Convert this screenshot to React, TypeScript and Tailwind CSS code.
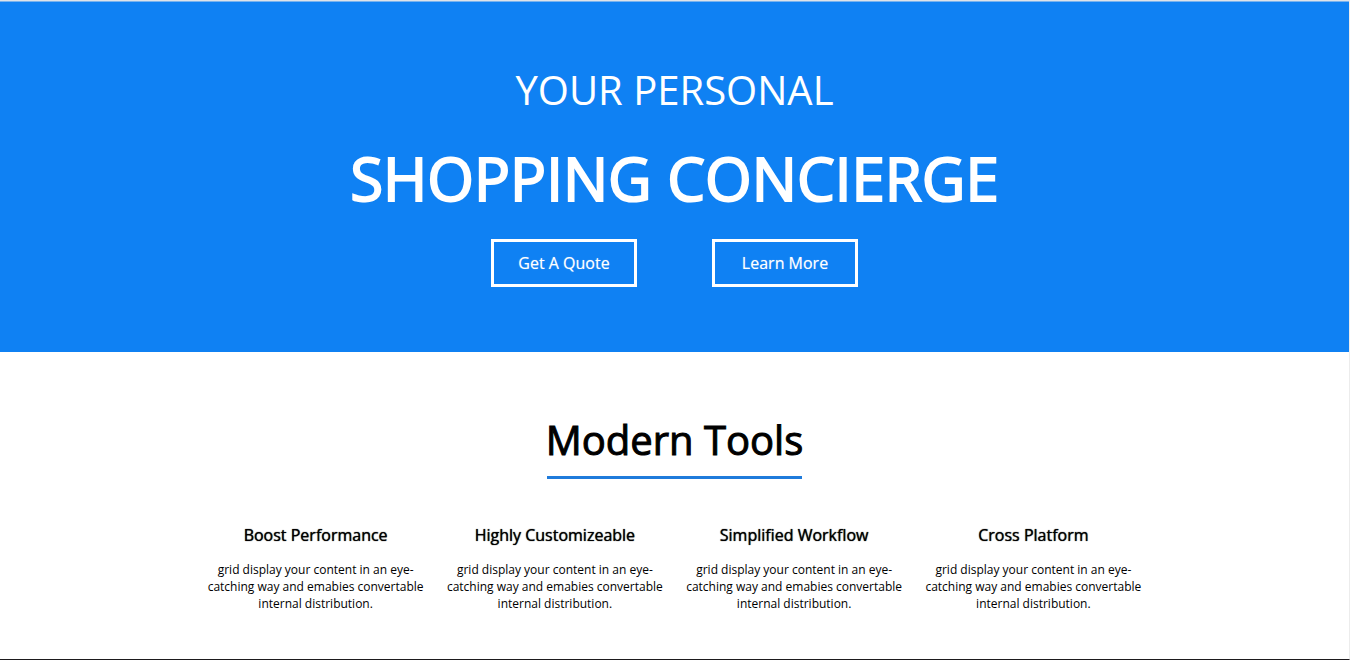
const tools = ["Boost Performance", "Highly Customizeable", "Simplified Workflow", "Cross Platform"];

const buttonClass =
  "h-12 w-[146px] border-3 border-white text-base text-white [text-shadow:0_0_1px_#ffffff80]";

export default function App() {
  return (
    <div className="flex min-h-screen flex-col border-t border-r border-b border-t-[#dfe3e8] border-r-[#ececec] border-b-[#1d1a1d] bg-white font-['Open_Sans',sans-serif] text-black">
      <header className="border-t border-[#79b3ee] bg-[#0f81f3] pt-[58px] pb-[65px] text-center text-white">
        <p className="text-[40px] leading-[60px]">YOUR PERSONAL</p>
        <h1 className="mt-3 text-[60px] leading-[92px] font-normal [-webkit-text-stroke:2px_currentColor]">
          SHOPPING CONCIERGE
        </h1>
        <div className="mt-[15px] flex justify-center gap-[75px]">
          <button type="button" className={buttonClass}>Get A Quote</button>
          <button type="button" className={buttonClass}>Learn More</button>
        </div>
      </header>
      <main className="pt-[58px] text-center">
        <h2 className="text-[40px] leading-[60px] font-normal [-webkit-text-stroke:1px_currentColor]">
          Modern Tools
        </h2>
        <div className="mx-auto mt-[6px] h-[3px] w-[255px] bg-[#1f7bdb]" />
        <div className="mx-auto mt-11 grid max-w-[957px] grid-cols-4">
          {tools.map((title) => (
            <section key={title} className="px-2">
              <h3 className="text-base leading-6 font-normal [text-shadow:0_0_1px_currentColor]">{title}</h3>
              <p className="mt-[14px] text-xs leading-[17px]">
                grid display your content in an eye-catching way and emabies convertable internal distribution.
              </p>
            </section>
          ))}
        </div>
      </main>
    </div>
  );
}
